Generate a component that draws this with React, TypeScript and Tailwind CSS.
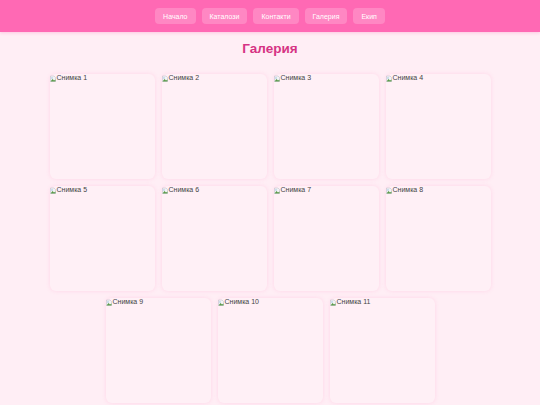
import React from "react";

const nav = ["Начало", "Каталози", "Контакти", "Галерия", "Екип"];
const items = Array.from({ length: 11 }, (_, i) => `Снимка ${i + 1}`);

function Broken() {
  return (
    <svg width="6" height="7" viewBox="0 0 6 7" className="shrink-0">
      <path d="M0.5 1 L4 1 L5.5 2.5 L5.5 6.5 L0.5 6.5 Z" fill="#f4f4f4" stroke="#aab" strokeWidth="0.4" />
      <path d="M0.5 6.5 L2.5 4 L4 5.5 L5.5 4.5 L5.5 6.5 Z" fill="#5a9a4a" />
      <circle cx="2" cy="3" r="0.7" fill="#8ab8e0" />
    </svg>
  );
}

export default function App() {
  return (
    <div
      className="min-h-[405px] bg-[#ffeef5]"
      style={{ fontFamily: '"Liberation Sans", Arial, sans-serif' }}
    >
      <header className="h-[32px] bg-[#ff69b4] flex items-center justify-center gap-[6px] shadow-[0_1px_3px_rgba(255,105,180,0.3)]">
        {nav.map((n) => (
          <a
            key={n}
            className="h-[16px] px-[8px] flex items-center rounded-[4px] bg-[rgba(255,255,255,0.2)] text-white text-[7px] leading-none"
          >
            {n}
          </a>
        ))}
      </header>
      <h1 className="text-center text-[13.5px] font-bold text-[#d63384] mt-[7px] leading-[20px]">
        Галерия
      </h1>
      <div className="flex flex-wrap justify-center gap-[7px] mt-[15px]">
        {items.map((t) => (
          <div
            key={t}
            className="w-[105px] h-[105px] rounded-[6px] bg-[#fff0f6] shadow-[0_0_4px_rgba(255,105,180,0.18)]"
          >
            <div className="flex items-center gap-[1px] text-[7px] leading-[8px] text-[#444]">
              <Broken />
              <span>{t}</span>
            </div>
          </div>
        ))}
      </div>
    </div>
  );
}
